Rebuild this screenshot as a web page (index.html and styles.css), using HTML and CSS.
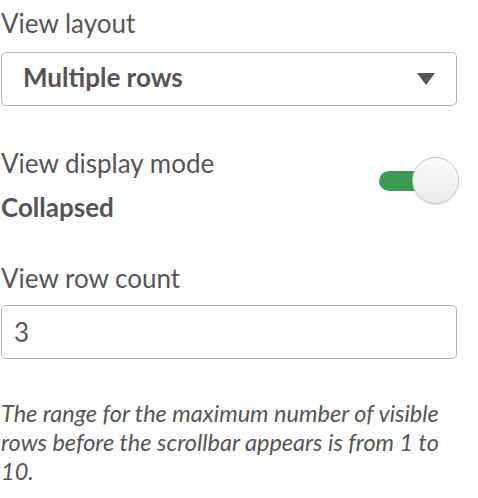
FILE: index.html
```html
<!DOCTYPE html>
<html lang="en">
<head>
  <meta charset="UTF-8">
  <meta name="viewport" content="width=device-width, initial-scale=1.0">
  <title>View settings</title>
  <link rel="stylesheet" href="styles.css">
</head>
<body>
  <div class="panel">
    <div class="label first">View layout</div>
    <div class="select">
      <span class="select-value">Multiple rows</span>
      <svg class="caret" width="18" height="12" viewBox="0 0 18 12"><polygon points="0,0 18,0 9,12" fill="#555"/></svg>
    </div>

    <div class="mode-row">
      <div class="mode-text">
        <div class="label tall">View display mode</div>
        <div class="value tall">Collapsed</div>
      </div>
      <div class="toggle">
        <div class="toggle-track"></div>
        <div class="toggle-knob"></div>
      </div>
    </div>

    <div class="label count">View row count</div>
    <div class="input">3</div>

    <p class="help">The range for the maximum number of visible rows before the scrollbar appears is from 1 to 10.</p>
  </div>
</body>
</html>
```
FILE: styles.css
```css
body {
  margin: 0;
  background-color: #fff;
  color: #555;
  font-family: Lato, "Noto Sans", sans-serif;
}
.panel {
  width: 456px;
  padding-left: 1px;
}
.label {
  font-size: 26px;
  line-height: 32px;
}
.label.first {
  margin-top: 7px;
}
.select {
  box-sizing: border-box;
  height: 54px;
  margin-top: 13px;
  display: flex;
  justify-content: space-between;
  align-items: center;
  padding: 0 21px 4px 21px;
  border: 1px solid #b5b5b5;
  border-radius: 5px;
}
.select-value {
  font-size: 26px;
  line-height: 32px;
  font-weight: 700;
}
.caret {
  margin-top: 4px;
}
.mode-row {
  display: flex;
  justify-content: space-between;
  align-items: flex-start;
  margin-top: 35px;
}
.tall {
  line-height: 44px;
}
.value {
  font-size: 26px;
  font-weight: 700;
}
.toggle {
  position: relative;
  width: 80px;
  height: 48px;
  margin-top: 16px;
  margin-right: -2px;
}
.toggle-track {
  position: absolute;
  left: 0;
  top: 14px;
  width: 52px;
  height: 20px;
  border-radius: 10px;
  background-color: #3d9a50;
}
.toggle-knob {
  position: absolute;
  right: 0;
  top: 0;
  width: 45px;
  height: 45px;
  border-radius: 50%;
  border: 1px solid #c4c4c4;
  background: linear-gradient(#fafafa, #ececec);
  box-shadow: 0 1px 2px rgba(0, 0, 0, 0.12);
}
.label.count {
  margin-top: 33px;
}
.input {
  box-sizing: border-box;
  height: 54px;
  margin-top: 11px;
  display: flex;
  align-items: center;
  padding: 0 12px;
  border: 1px solid #b5b5b5;
  border-radius: 5px;
  font-size: 26px;
  line-height: 32px;
}
.help {
  margin: 40px 0 0;
  font-size: 23.5px;
  line-height: 29px;
  font-style: italic;
}
```
